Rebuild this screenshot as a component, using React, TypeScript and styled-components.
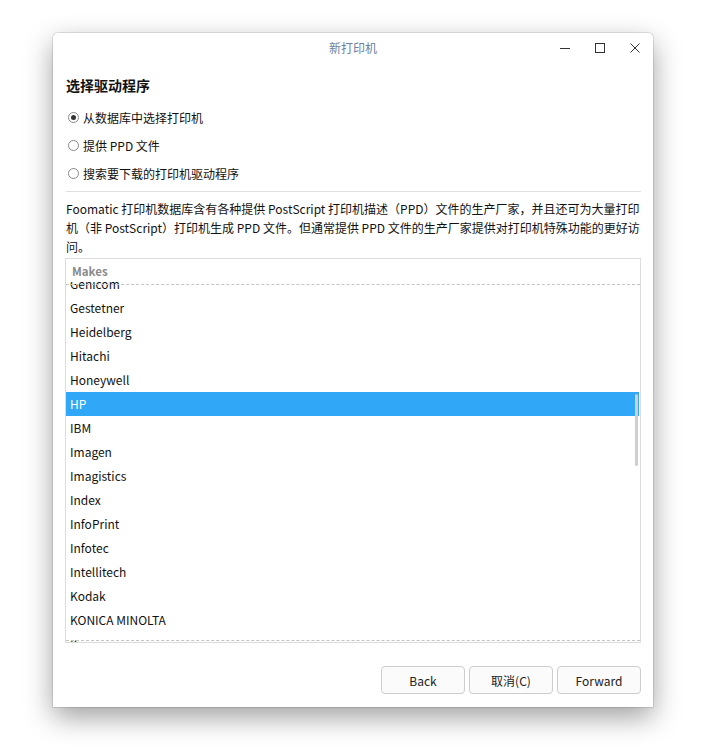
import React from "react";
import styled, { createGlobalStyle } from "styled-components";

const Global = createGlobalStyle`
  html, body { margin: 0; padding: 0; background: #ffffff; }
  body { font-family: "Noto Sans CJK SC", "Noto Sans", sans-serif; }
`;

const Page = styled.div`
  padding: 33px 53px 42px 53px;
  width: 600px;
`;

const Window = styled.div`
  width: 600px;
  height: 674px;
  background: #ffffff;
  border-radius: 5px 5px 0 0;
  box-shadow: 0 10px 28px rgba(0, 0, 0, 0.38), 0 0 0 1px rgba(0, 0, 0, 0.1);
  display: flex;
  flex-direction: column;
  box-sizing: border-box;
  overflow: hidden;
`;

const TitleBar = styled.div`
  height: 29px;
  display: grid;
  grid-template-columns: 1fr auto 1fr;
  align-items: center;
  flex-shrink: 0;
`;

const Title = styled.div`
  font-size: 12px;
  color: #6f7f99;
  grid-column: 2;
  margin-top: -1px;
`;

const Controls = styled.div`
  grid-column: 3;
  justify-self: end;
  display: flex;
  align-items: center;
  padding-right: 1px;
`;

const CtrlBtn = styled.div`
  width: 35px;
  height: 29px;
  display: flex;
  align-items: center;
  justify-content: center;
`;

const Body = styled.div`
  flex: 1;
  display: flex;
  flex-direction: column;
  padding: 0 12px 0 13px;
`;

const Heading = styled.div`
  font-size: 14px;
  font-weight: 700;
  color: #111;
  height: 20px;
  line-height: 20px;
  margin-top: 13px;
`;

const Radios = styled.div`
  display: flex;
  flex-direction: column;
  margin-top: 8px;
  padding-left: 2px;
`;

const RadioRow = styled.div`
  height: 28px;
  display: flex;
  align-items: center;
  gap: 4px;
  font-size: 12px;
  color: #111;
`;

const RadioCircle = styled.span<{ $on?: boolean }>`
  width: 11px;
  height: 11px;
  border-radius: 50%;
  border: 1px solid #8a8a8a;
  box-sizing: border-box;
  display: inline-flex;
  align-items: center;
  justify-content: center;
  background: #fff;
  &::after {
    content: "";
    width: 5px;
    height: 5px;
    border-radius: 50%;
    background: ${(p) => (p.$on ? "#333" : "transparent")};
  }
`;

const Separator = styled.div`
  height: 1px;
  background: #e0e0e0;
  margin-top: 4px;
`;

const Paragraph = styled.p`
  margin: 7px 0 0 0;
  font-size: 12px;
  line-height: 19px;
  color: #111;
  white-space: nowrap;
`;

const ListBox = styled.div`
  margin-top: 2px;
  border: 1px solid #dcdcdc;
  height: 385px;
  box-sizing: border-box;
  position: relative;
  overflow: hidden;
  margin-left: -1px;
`;

const ListInner = styled.div`
  padding-top: 13px;
  display: flex;
  flex-direction: column;
`;

const Row = styled.div<{ $sel?: boolean }>`
  height: 24px;
  line-height: 24px;
  padding-left: 4px;
  font-size: 12px;
  color: ${(p) => (p.$sel ? "#ffffff" : "#111")};
  background: ${(p) => (p.$sel ? "#30a7f7" : "transparent")};
  margin-right: 1px;
`;

const Header = styled.div`
  position: absolute;
  top: 0;
  left: 0;
  right: 0;
  height: 23px;
  background: #fff;
  padding-left: 6px;
  font-size: 11.5px;
  font-weight: 700;
  color: #8a8a8a;
  line-height: 24px;
`;

const Dashed = styled.div<{ $top: number }>`
  position: absolute;
  left: 0;
  right: 0;
  top: ${(p) => p.$top}px;
  height: 0;
  border-top: 1px dashed #c4c4c4;
`;

const Scrollbar = styled.div`
  position: absolute;
  right: 2px;
  top: 135px;
  width: 3px;
  height: 72px;
  border-radius: 2px;
  background: #cfcfcf;
`;

const Footer = styled.div`
  margin-top: auto;
  display: flex;
  justify-content: flex-end;
  gap: 4px;
  padding-bottom: 13px;
`;

const Button = styled.button`
  width: 84px;
  height: 28px;
  border: 1px solid #cdcdcd;
  border-radius: 4px;
  background: #fbfbfb;
  font-family: "Noto Sans CJK SC", "Noto Sans", sans-serif;
  font-size: 12px;
  color: #222;
  padding: 0;
`;

const makes = [
  "Genicom",
  "Gestetner",
  "Heidelberg",
  "Hitachi",
  "Honeywell",
  "HP",
  "IBM",
  "Imagen",
  "Imagistics",
  "Index",
  "InfoPrint",
  "Infotec",
  "Intellitech",
  "Kodak",
  "KONICA MINOLTA",
  "Kyocera",
];

export default function App() {
  return (
    <>
      <Global />
      <Page>
        <Window>
          <TitleBar>
            <Title>新打印机</Title>
            <Controls>
              <CtrlBtn>
                <svg width="12" height="12" viewBox="0 0 12 12">
                  <line x1="1" y1="6.5" x2="11" y2="6.5" stroke="#333" strokeWidth="1" />
                </svg>
              </CtrlBtn>
              <CtrlBtn>
                <svg width="12" height="12" viewBox="0 0 12 12">
                  <rect x="1.5" y="1.5" width="9" height="9" fill="none" stroke="#333" strokeWidth="1" />
                </svg>
              </CtrlBtn>
              <CtrlBtn>
                <svg width="12" height="12" viewBox="0 0 12 12">
                  <path d="M1.5 1.5 L10.5 10.5 M10.5 1.5 L1.5 10.5" stroke="#333" strokeWidth="1" />
                </svg>
              </CtrlBtn>
            </Controls>
          </TitleBar>
          <Body>
            <Heading>选择驱动程序</Heading>
            <Radios>
              <RadioRow>
                <RadioCircle $on />
                从数据库中选择打印机
              </RadioRow>
              <RadioRow>
                <RadioCircle />
                提供 PPD 文件
              </RadioRow>
              <RadioRow>
                <RadioCircle />
                搜索要下载的打印机驱动程序
              </RadioRow>
            </Radios>
            <Separator />
            <Paragraph>
              Foomatic 打印机数据库含有各种提供 PostScript 打印机描述（PPD）文件的生产厂家，并且还可为大量打印
              <br />
              机（非 PostScript）打印机生成 PPD 文件。但通常提供 PPD 文件的生产厂家提供对打印机特殊功能的更好访
              <br />
              问。
            </Paragraph>
            <ListBox>
              <ListInner>
                {makes.map((m) => (
                  <Row key={m} $sel={m === "HP"}>
                    {m}
                  </Row>
                ))}
              </ListInner>
              <Header>Makes</Header>
              <Dashed $top={25} />
              <Dashed $top={381} />
              <Scrollbar />
            </ListBox>
            <Footer>
              <Button>Back</Button>
              <Button>取消(C)</Button>
              <Button>Forward</Button>
            </Footer>
          </Body>
        </Window>
      </Page>
    </>
  );
}
